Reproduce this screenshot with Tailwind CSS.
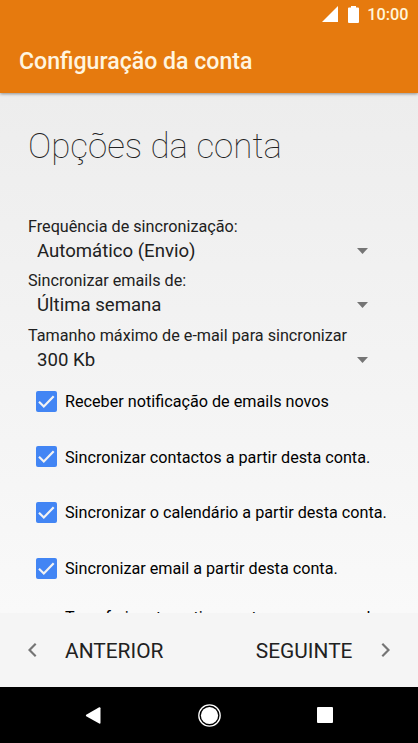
<!DOCTYPE html>
<html lang="pt">
<head>
<meta charset="utf-8">
<title>Configuração da conta</title>
<script src="https://cdn.jsdelivr.net/npm/@tailwindcss/browser@4"></script>
</head>
<body class="w-[418px] h-[743px] overflow-hidden font-[Roboto,sans-serif] flex flex-col text-[#212121] whitespace-nowrap">
<header class="relative z-10 h-[93px] shrink-0 bg-[#e67a0e] shadow-[0_1px_3px_rgba(0,0,0,0.4)]">
  <div class="h-7 flex items-center justify-end pr-[9.5px] text-[#fff5d9]">
    <svg class="w-4 h-4 mr-[10px]" viewBox="0 0 16 16" fill="#fff"><path d="M0 16L16 0V16Z"/></svg>
    <svg class="w-[11px] h-[17px] mr-[8.5px]" viewBox="0 0 11 17" fill="#fff"><path d="M3 0H8V1.5H10Q11 1.5 11 2.5V16Q11 17 10 17H1Q0 17 0 16V2.5Q0 1.5 1 1.5H3Z"/></svg>
    <span class="text-[16.25px] leading-5 pt-[2px] font-medium">10:00</span>
  </div>
  <h1 class="pl-[19px] h-[65px] leading-[67px] text-[23.1px] font-medium text-[#fff5e0]">Configuração da conta</h1>
</header>
<main class="h-[520px] shrink-0 overflow-hidden bg-linear-to-b from-[#ededed] to-[#f9f9f9]">
  <h2 class="mt-[34px] pl-[28px] h-10 leading-10 text-[34.9px] font-thin">Opções da conta</h2>
  <section class="mt-[49px] ml-[28px]">
    <div class="h-[54.6px]">
      <div class="h-[20px] leading-[21px] text-[16.2px]">Frequência de sincronização:</div>
      <div class="h-[29px] flex items-center pl-[9px] text-[18.6px]"><span class="w-[320px] pt-[2px]">Automático (Envio)</span><svg class="w-[11px] h-[6px]" viewBox="0 0 11 6" fill="#757575"><path d="M0 0H11L5.5 6Z"/></svg></div>
    </div>
    <div class="h-[54.6px]">
      <div class="h-[20px] leading-[20px] text-[16.2px]">Sincronizar emails de:</div>
      <div class="h-[29px] flex items-center pl-[9px] text-[18.6px]"><span class="w-[320px] pt-[2px]">Última semana</span><svg class="w-[11px] h-[6px]" viewBox="0 0 11 6" fill="#757575"><path d="M0 0H11L5.5 6Z"/></svg></div>
    </div>
    <div class="h-[54.6px]">
      <div class="h-[20px] leading-[21px] text-[16.2px]">Tamanho máximo de e-mail para sincronizar</div>
      <div class="h-[29px] flex items-center pl-[9px] text-[18.6px]"><span class="w-[320px] pt-[2px]">300 Kb</span><svg class="w-[11px] h-[6px]" viewBox="0 0 11 6" fill="#757575"><path d="M0 0H11L5.5 6Z"/></svg></div>
    </div>
  </section>
  <section class="-mt-[6.5px] ml-9 text-[16.2px] text-black">
    <div class="h-[55.7px] flex items-center gap-2"><svg class="w-[21px] h-[21px]" viewBox="0 0 21 21"><rect width="21" height="21" rx="2" fill="#4285f4"/><path d="M3 10.8L7.8 15.5L17.7 5.3" fill="none" stroke="#f3f3f3" stroke-width="2.2"/></svg><span class="pt-[2px]">Receber notificação de emails novos</span></div>
    <div class="h-[55.7px] flex items-center gap-2"><svg class="w-[21px] h-[21px]" viewBox="0 0 21 21"><rect width="21" height="21" rx="2" fill="#4285f4"/><path d="M3 10.8L7.8 15.5L17.7 5.3" fill="none" stroke="#f3f3f3" stroke-width="2.2"/></svg><span class="pt-[2px]">Sincronizar contactos a partir desta conta.</span></div>
    <div class="h-[55.7px] flex items-center gap-2"><svg class="w-[21px] h-[21px]" viewBox="0 0 21 21"><rect width="21" height="21" rx="2" fill="#4285f4"/><path d="M3 10.8L7.8 15.5L17.7 5.3" fill="none" stroke="#f3f3f3" stroke-width="2.2"/></svg><span class="pt-[2px]">Sincronizar o calendário a partir desta conta.</span></div>
    <div class="h-[55.7px] flex items-center gap-2"><svg class="w-[21px] h-[21px]" viewBox="0 0 21 21"><rect width="21" height="21" rx="2" fill="#4285f4"/><path d="M3 10.8L7.8 15.5L17.7 5.3" fill="none" stroke="#f3f3f3" stroke-width="2.2"/></svg><span class="pt-[2px]">Sincronizar email a partir desta conta.</span></div>
    <div class="pl-[29px] pt-[12px] leading-[19px]">Transferir automaticamente anexos quando</div>
  </section>
</main>
<footer class="h-[74px] shrink-0 bg-[#f5f5f5] flex items-center pl-[28px] pr-[28px] text-[20.9px]">
  <svg class="w-[9px] h-[14px] mr-[28px]" viewBox="0 0 9 14" fill="none" stroke="#757575" stroke-width="2.2"><path d="M7.7 .8L1.5 7L7.7 13.2"/></svg>
  <span class="pt-[3px]">ANTERIOR</span>
  <span class="ml-auto pt-[3px]">SEGUINTE</span>
  <svg class="w-[9px] h-[14px] ml-[28.5px]" viewBox="0 0 9 14" fill="none" stroke="#757575" stroke-width="2.2"><path d="M1.3 .8L7.5 7L1.3 13.2"/></svg>
</footer>
<nav class="h-14 shrink-0 bg-black flex items-center pl-[85px]">
  <svg class="w-4 h-[17px]" viewBox="0 0 16 17" fill="#fff"><path d="M14.2 .2Q15.5 0 15.5 1.2V15.8Q15.5 17 14.2 16.6L1.2 9.3Q.4 8.5 1.2 7.7Z"/></svg>
  <svg class="w-[23px] h-[23px] ml-[96.5px]" viewBox="0 0 23 23"><circle cx="11.5" cy="11.5" r="10.7" fill="none" stroke="#fff" stroke-width="1.3"/><circle cx="11.5" cy="11.5" r="8.6" fill="#fff"/></svg>
  <div class="w-4 h-4 ml-[96.5px] rounded-[1px] bg-white"></div>
</nav>
</body>
</html>
